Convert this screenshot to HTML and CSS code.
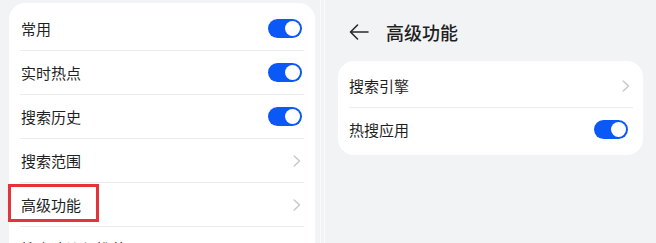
FILE: index.html
```html
<!DOCTYPE html>
<html lang="zh-CN">
<head>
<meta charset="utf-8">
<title>高级功能</title>
<link rel="stylesheet" href="styles.css">
</head>
<body>
<div class="pane-left">
  <div class="card card-left">
    <div class="row"><span class="label">常用</span><span class="toggle on"><span class="knob"></span></span></div>
    <div class="sep"></div>
    <div class="row"><span class="label">实时热点</span><span class="toggle on"><span class="knob"></span></span></div>
    <div class="sep"></div>
    <div class="row"><span class="label">搜索历史</span><span class="toggle on"><span class="knob"></span></span></div>
    <div class="sep"></div>
    <div class="row"><span class="label">搜索范围</span><svg class="chev" width="8" height="12" viewBox="0 0 8 12"><polyline points="1.2,1 6.5,6 1.2,11" /></svg></div>
    <div class="sep"></div>
    <div class="row row-hl"><span class="label">高级功能</span><svg class="chev" width="8" height="12" viewBox="0 0 8 12"><polyline points="1.2,1 6.5,6 1.2,11" /></svg><span class="highlight"></span></div>
    <div class="sep"></div>
    <div class="row"><span class="label muted">搜索建议与推荐</span><svg class="chev" width="8" height="12" viewBox="0 0 8 12"><polyline points="1.2,1 6.5,6 1.2,11" /></svg></div>
  </div>
</div>
<div class="splitter"><span class="line"></span><span class="line"></span></div>
<div class="pane-right">
  <div class="header">
    <svg class="back" width="20" height="16" viewBox="0 0 20 16"><path d="M8.5 1 L1.5 8 L8.5 15 M1.5 8 H19" /></svg>
    <span class="title">高级功能</span>
  </div>
  <div class="card card-right">
    <div class="row"><span class="label">搜索引擎</span><svg class="chev" width="8" height="12" viewBox="0 0 8 12"><polyline points="1.2,1 6.5,6 1.2,11" /></svg></div>
    <div class="sep"></div>
    <div class="row"><span class="label">热搜应用</span><span class="toggle on"><span class="knob"></span></span></div>
  </div>
</div>
</body>
</html>
```

FILE: styles.css
```css
* { box-sizing: border-box; }
html, body {
  margin: 0;
  padding: 0;
}
body {
  width: 656px;
  height: 243px;
  overflow: hidden;
  background: #f1f3f5;
  display: flex;
  font-family: "Noto Sans CJK SC", "Noto Sans", sans-serif;
  color: #1f1f1f;
}
.pane-left {
  width: 318px;
  flex: none;
  padding: 3px 3px 0 9px;
}
.card {
  background: #ffffff;
  border-radius: 16px;
}
.card-left {
  padding-top: 4px;
  border-radius: 16px 16px 0 0;
}
.row {
  height: 43px;
  display: flex;
  align-items: center;
  justify-content: space-between;
  padding: 0 13px 0 12px;
  position: relative;
}
.label {
  font-size: 15px;
  line-height: 20px;
}
.label.muted { color: #1f1f1f; }
.sep {
  height: 1px;
  background: #ececee;
  margin: 0 11px;
}
.toggle {
  width: 34px;
  height: 19px;
  border-radius: 10px;
  background: #0a59f7;
  display: flex;
  align-items: center;
  justify-content: flex-end;
  padding-right: 2px;
}
.knob {
  width: 15px;
  height: 15px;
  border-radius: 50%;
  background: #ffffff;
}
.chev {
  display: block;
  margin-right: 1px;
}
.chev polyline {
  fill: none;
  stroke: #c9c9cb;
  stroke-width: 1.5;
  stroke-linecap: round;
  stroke-linejoin: round;
}
.highlight {
  position: absolute;
  left: -1px;
  top: 1px;
  width: 91px;
  height: 38px;
  border: 3px solid #e5333b;
}
.splitter {
  width: 8px;
  flex: none;
  display: flex;
  justify-content: space-between;
  padding: 0 1px 0 2px;
}
.splitter .line {
  width: 1px;
  background: #fafbfc;
}
.pane-right {
  flex: 1;
}
.header {
  height: 24px;
  margin: 20px 0 17px;
  padding-left: 23px;
  display: flex;
  align-items: center;
  gap: 17px;
}
.back path {
  fill: none;
  stroke: #2a2a2a;
  stroke-width: 1.6;
  stroke-linecap: round;
  stroke-linejoin: round;
}
.title {
  font-size: 18px;
  font-weight: 500;
  line-height: 24px;
  color: #1f1f1f;
}
.card-right {
  margin: 0 13px 0 12px;
  padding: 3px 0 4px;
}
.card-right .row {
  padding: 0 12px 0 11px;
}
.card-right .toggle {
  margin-right: 3px;
}
.card-right .sep {
  margin: 0 10px 0 11px;
}
```
